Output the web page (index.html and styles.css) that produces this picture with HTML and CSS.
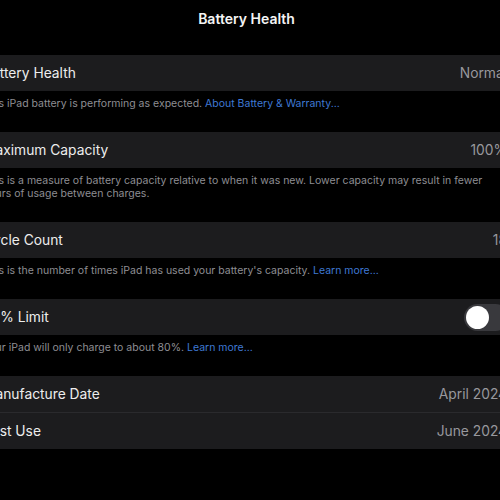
FILE: index.html
```html
<!DOCTYPE html>
<html lang="en">
<head>
<meta charset="utf-8">
<title>Battery Health</title>
<link rel="stylesheet" href="styles.css">
</head>
<body>
<div class="page">
  <header class="nav">
    <svg class="back" width="12" height="16" viewBox="0 0 12 16"><path d="M9 2 L3 8 L9 14" fill="none" stroke="#4a4a4e" stroke-width="2" stroke-linecap="round" stroke-linejoin="round"/></svg>
    <h1 class="title">Battery Health</h1>
  </header>
  <main class="content">
    <section class="group">
      <div class="rows">
        <div class="row"><span class="label">Battery Health</span><span class="value">Normal</span></div>
      </div>
      <p class="footer">This iPad battery is performing as expected. <span class="link">About Battery &amp; Warranty...</span></p>
    </section>
    <section class="group">
      <div class="rows">
        <div class="row"><span class="label">Maximum Capacity</span><span class="value">100%</span></div>
      </div>
      <p class="footer">This is a measure of battery capacity relative to when it was new. Lower capacity may result in fewer<br>hours of usage between charges.</p>
    </section>
    <section class="group">
      <div class="rows">
        <div class="row"><span class="label">Cycle Count</span><span class="value">18</span></div>
      </div>
      <p class="footer">This is the number of times iPad has used your battery's capacity. <span class="link">Learn more...</span></p>
    </section>
    <section class="group">
      <div class="rows">
        <div class="row"><span class="label">80% Limit</span><span class="toggle"><span class="knob"></span></span></div>
      </div>
      <p class="footer">Your iPad will only charge to about 80%. <span class="link">Learn more...</span></p>
    </section>
    <section class="group">
      <div class="rows">
        <div class="row"><span class="label">Manufacture Date</span><span class="value">April 2024</span></div>
        <div class="row row-sep"><span class="label">First Use</span><span class="value">June 2024</span></div>
      </div>
    </section>
  </main>
</div>
</body>
</html>
```

FILE: styles.css
```css
html, body {
  margin: 0;
  padding: 0;
  background: #000;
  overflow: hidden;
}
body {
  font-family: Inter, "Noto Sans", "Liberation Sans", sans-serif;
  color: #f2f2f2;
  width: 500px;
  height: 500px;
}
.page {
  margin-left: -30px;
  width: 553px;
}
.nav {
  height: 37px;
  display: flex;
  align-items: center;
  justify-content: center;
  position: relative;
}
.back {
  position: absolute;
  left: 18px;
  top: 11px;
}
.title {
  margin: 0;
  font-size: 14px;
  font-weight: 600;
  color: #f5f5f5;
}
.content {
  padding-top: 18px;
}
.group {
  margin: 0;
}
.rows {
  background: #1c1c1e;
}
.row {
  height: 36px;
  display: flex;
  align-items: center;
  justify-content: space-between;
  padding: 0 16px 0 13px;
  font-size: 13.8px;
}
.row-sep {
  height: 37px;
  box-sizing: border-box;
  border-top: 1px solid #2a2a2d;
}
.label {
  color: #ededed;
}
.value {
  color: #98989d;
}
.footer {
  margin: 0 0 22px;
  padding: 6px 16px 0 13px;
  font-size: 10.5px;
  line-height: 13px;
  color: #8e8e93;
}
.link {
  color: #3f79d4;
}
.toggle {
  width: 45px;
  height: 27px;
  border-radius: 14px;
  background: #39393d;
  display: flex;
  align-items: center;
  padding: 0 2px;
  box-sizing: border-box;
  margin-right: -2px;
}
.knob {
  width: 23px;
  height: 23px;
  border-radius: 50%;
  background: #fff;
}
```
